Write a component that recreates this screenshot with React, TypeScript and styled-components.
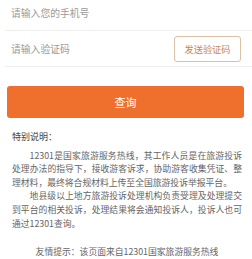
import React from "react";
import styled, { createGlobalStyle } from "styled-components";

const Global = createGlobalStyle`
  html, body { margin: 0; padding: 0; background: #fff; }
  body { font-family: "Noto Sans CJK SC", "Noto Sans", sans-serif; overflow: hidden; }
`;

const Page = styled.div`
  width: 252px;
  height: 259px;
  overflow: hidden;
  background: #fff;
`;

const Form = styled.div`
  margin-top: -5px;
  padding-left: 5px;
`;

const Field = styled.div`
  height: 35px;
  display: flex;
  align-items: center;
  justify-content: space-between;
  padding: 0 11px 0 6px;
  border-bottom: 1px solid #efefef;
`;

const Placeholder = styled.span`
  font-size: 9.8px;
  color: #9a9a9a;
`;

const SendButton = styled.button`
  width: 67px;
  height: 26px;
  margin-top: 1px;
  border: 1px solid #dcc0a4;
  border-radius: 3px;
  background: #fff;
  color: #c9864d;
  font-family: inherit;
  font-size: 9.2px;
  padding: 0;
`;

const QueryButton = styled.button`
  display: block;
  margin: 19px 8px 0 7px;
  width: 237px;
  height: 32px;
  border: none;
  border-radius: 3px;
  background: #ef6f2d;
  color: #fff;
  font-family: inherit;
  font-size: 11px;
  padding: 0;
`;

const Notes = styled.div`
  padding: 12px 10px 0 12px;
  color: #666;
  font-size: 8.8px;
  line-height: 13.6px;
`;

const NoteTitle = styled.div`
  color: #444;
  font-size: 9px;
  margin-bottom: 5px;
`;

const Para = styled.p`
  margin: 0;
  text-indent: 2em;
  text-align: justify;
`;

const Footer = styled.div`
  margin-top: 15px;
  text-align: center;
  color: #666;
  font-size: 8.8px;
`;

export default function App() {
  return (
    <Page>
      <Global />
      <Form>
        <Field>
          <Placeholder>请输入您的手机号</Placeholder>
        </Field>
        <Field>
          <Placeholder>请输入验证码</Placeholder>
          <SendButton>发送验证码</SendButton>
        </Field>
      </Form>
      <QueryButton>查询</QueryButton>
      <Notes>
        <NoteTitle>特别说明：</NoteTitle>
        <Para>
          12301是国家旅游服务热线，其工作人员是在旅游投诉处理办法的指导下，接收游客诉求，协助游客收集凭证、整理材料，最终将合规材料上传至全国旅游投诉举报平台。
        </Para>
        <Para>
          地县级以上地方旅游投诉处理机构负责受理及处理提交到平台的相关投诉，处理结果将会通知投诉人，投诉人也可通过12301查询。
        </Para>
        <Footer>友情提示：该页面来自12301国家旅游服务热线</Footer>
      </Notes>
    </Page>
  );
}
